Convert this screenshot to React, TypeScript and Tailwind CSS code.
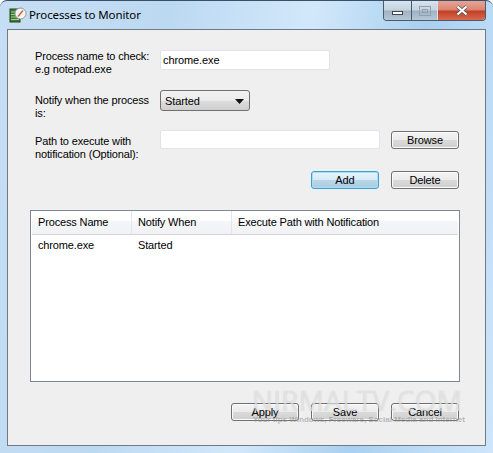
const font = "font-['Liberation_Sans',Arial,sans-serif]";

function WinButton({ label, focused, className = "" }: { label: string; focused?: boolean; className?: string }) {
  return (
    <button
      className={`h-[18px] w-[68px] rounded-[3px] border text-[11px] leading-none tracking-[-0.1px] text-black ${
        focused
          ? "border-[#3c9fd0] bg-[linear-gradient(#e8f4fb_0%,#d8eaf5_50%,#b9d6e8_52%,#a9cbe0_100%)] shadow-[inset_0_0_0_1px_#a5e0f5]"
          : "border-[#707070] bg-[linear-gradient(#f4f4f4_0%,#ebebeb_50%,#dadada_52%,#cfcfcf_100%)] shadow-[inset_0_0_0_1px_#fbfbfb]"
      } ${className}`}
    >
      {label}
    </button>
  );
}

function TitleIcon() {
  return (
    <svg width="18" height="18" viewBox="0 0 18 18" className="shrink-0">
      <rect x="1" y="3" width="10" height="13" fill="#3f7a37" stroke="#24401f" />
      <path d="M2 6h8M2 8.500h8M2 11h8M2 13.500h8" stroke="#9fce8a" strokeWidth="1" />
      <circle cx="11.500" cy="7.500" r="5.500" fill="#f4f6f6" stroke="#8d9698" />
      <path d="M9 10.500 14 4.500" stroke="#d8604c" strokeWidth="1.500" />
    </svg>
  );
}

function Controls() {
  return (
    <div className="absolute right-[7px] top-0 flex h-[20px] overflow-hidden rounded-b-[4px] border border-t-0 border-[#4b5a68]">
      <div className="flex w-[28px] items-center justify-center border-r border-[#4b5a68] bg-[linear-gradient(#d8e4ee_0%,#c4d3e0_48%,#9fb2c3_52%,#b6c7d6_100%)] pt-[5px]">
        <div className="h-[4px] w-[11px] border border-[#3c4650] bg-white" />
      </div>
      <div className="flex w-[26px] items-center justify-center border-r border-[#d8e2ea] bg-[linear-gradient(#d8e4ee_0%,#c4d3e0_48%,#9fb2c3_52%,#b6c7d6_100%)]">
        <div className="flex h-[10px] w-[12px] items-center justify-center border border-[#8fa1b1]">
          <div className="h-[4px] w-[6px] border border-[#8fa1b1]" />
        </div>
      </div>
      <div className="flex w-[47px] items-center justify-center bg-[linear-gradient(#e8a394_0%,#d98473_48%,#bf3f24_52%,#d8694f_100%)]">
        <svg width="12" height="11" viewBox="0 0 12 11">
          <path d="M1.500 1.500 10.500 9.500M10.500 1.500 1.500 9.500" stroke="#4a4f55" strokeWidth="3.600" />
          <path d="M1.500 1.500 10.500 9.500M10.500 1.500 1.500 9.500" stroke="#ffffff" strokeWidth="2.200" />
        </svg>
      </div>
    </div>
  );
}

function Field({ label, labelClass = "", children }: { label: React.ReactNode; labelClass?: string; children: React.ReactNode }) {
  return (
    <div className="flex items-start">
      <div className={`w-[130px] shrink-0 whitespace-nowrap pl-[5px] text-[11px] leading-[13px] tracking-[-0.15px] text-black ${labelClass}`}>{label}</div>
      {children}
    </div>
  );
}

export default function App() {
  return (
    <div className={`${font} relative h-[453px] w-[493px] overflow-hidden rounded-t-[7px] border-t border-[#39506a] bg-[linear-gradient(100deg,#c6def3_0%,#bcd9f2_30%,#d2e8fa_55%,#a9d0f0_75%,#cfe6fb_100%)]`}>
      <div className="flex h-[28px] items-center gap-[2px] pl-[9px]">
        <TitleIcon />
        <span className="font-['Noto_Sans'] text-[11.500px] tracking-[-0.1px] text-black">Processes to Monitor</span>
      </div>
      <Controls />

      <div className="mx-[7px] flex h-[417px] flex-col border border-[#6f7a85] bg-[#efefef] pl-[22px] pr-[26px] pt-[20px]">
        <div className="flex flex-col">
          <Field label={<>Process name to check:<br />e.g notepad.exe</>}>
            <input
              readOnly
              value="chrome.exe"
              className="h-[20px] w-[170px] rounded-[2px] border border-[#e2e3ea] bg-white px-[2px] text-[11px] tracking-[-0.1px] text-black outline-none"
            />
          </Field>
          <div className="mt-[14px]">
            <Field labelClass="mt-[4px]" label={<>Notify when the process<br />is:</>}>
              <div className="flex h-[21px] w-[90px] items-center justify-between rounded-[3px] border border-[#707070] bg-[linear-gradient(#f2f2f2_0%,#ebebeb_50%,#dddddd_52%,#cfcfcf_100%)] pl-[4px] pr-[5px] pt-px text-[11px] tracking-[-0.1px]">
                Started
                <svg width="9" height="5" viewBox="0 0 9 5"><path d="M0 0h9L4.500 5z" fill="#111" /></svg>
              </div>
            </Field>
          </div>
          <div className="mt-[10px]">
            <Field labelClass="mt-[5px]" label={<>Path to execute with<br />notification (Optional):</>}>
              <input readOnly className="h-[19px] w-[220px] rounded-[2px] border border-[#e2e3ea] bg-white outline-none" />
              <WinButton label="Browse" className="ml-[11px] mt-px" />
            </Field>
          </div>
          <div className="mt-[10px] flex justify-end gap-[12px]">
            <WinButton label="Add" focused />
            <WinButton label="Delete" />
          </div>
        </div>

        <div className="mt-[21px] h-[172px] w-[430px] border border-[#828790] bg-white pl-px pr-px">
          <div className="flex h-[24px] border-b border-[#d5d5d5] bg-[linear-gradient(#ffffff_0%,#ffffff_40%,#f4f6f8_45%,#f0f2f5_100%)] text-[11px] tracking-[-0.15px] text-black">
            <div className="flex w-[100px] items-center border-r border-[#e3e5e8] pl-[6px]">Process Name</div>
            <div className="flex w-[100px] items-center border-r border-[#e3e5e8] pl-[6px]">Notify When</div>
            <div className="flex flex-1 items-center pl-[6px]">Execute Path with Notification</div>
          </div>
          <div className="flex h-[20px] items-center text-[11px] tracking-[-0.15px] text-black">
            <div className="w-[100px] pl-[6px]">chrome.exe</div>
            <div className="w-[100px] pl-[6px]">Started</div>
          </div>
        </div>

        <div className="mt-[21px] flex justify-end gap-[12px]">
          <WinButton label="Apply" />
          <WinButton label="Save" />
          <WinButton label="Cancel" />
        </div>
      </div>

      <div className="pointer-events-none absolute left-[252px] top-[385px] font-['Open_Sans'] text-[28px] leading-none tracking-[0.2px] text-white/50 [text-shadow:0_0_1px_rgba(150,150,150,0.5)]">
        NIRMALTV.COM
      </div>
      <div className="pointer-events-none absolute left-[253px] top-[415px] whitespace-nowrap text-[8px] font-bold leading-none text-[#8f8f8f]/60">
        Your tips Windows, Freeware, Social Media and Internet
      </div>
    </div>
  );
}
